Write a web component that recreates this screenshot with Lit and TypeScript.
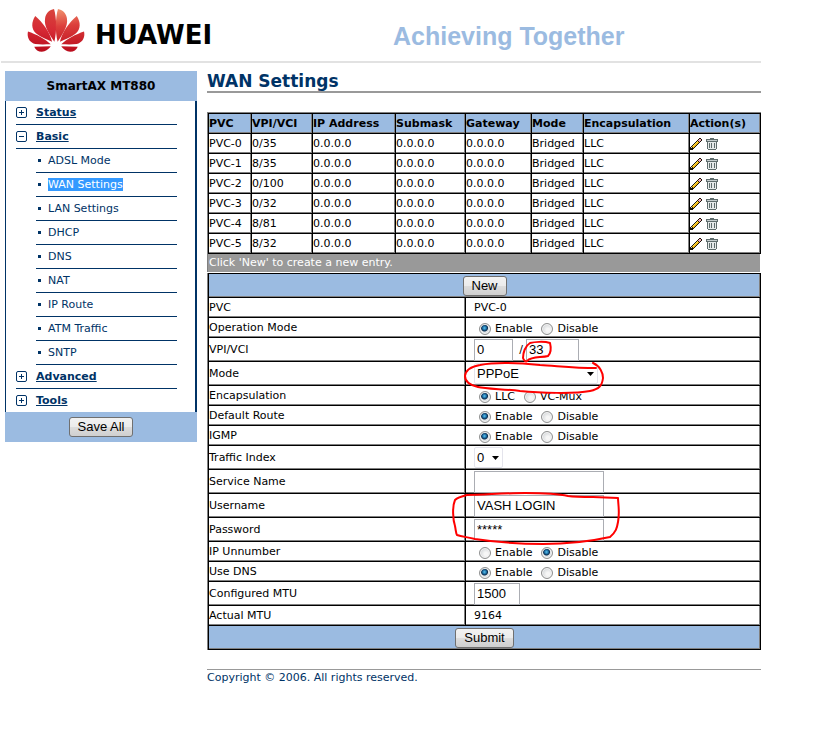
import { LitElement, html, css, svg, nothing, TemplateResult } from "lit";
import { customElement, state } from "lit/decorators.js";
import { classMap } from "lit/directives/class-map.js";

interface Pvc {
  name: string;
  circuit: string;
}

const PVCS: Pvc[] = [
  { name: "PVC-0", circuit: "0/35" },
  { name: "PVC-1", circuit: "8/35" },
  { name: "PVC-2", circuit: "0/100" },
  { name: "PVC-3", circuit: "0/32" },
  { name: "PVC-4", circuit: "8/81" },
  { name: "PVC-5", circuit: "8/32" },
];

const COLUMNS = ["PVC", "VPI/VCI", "IP Address", "Submask", "Gateway", "Mode", "Encapsulation", "Action(s)"];

const PAGES = ["ADSL Mode", "WAN Settings", "LAN Settings", "DHCP", "DNS", "NAT", "IP Route", "ATM Traffic", "SNTP"];

@customElement("brand-header")
class BrandHeader extends LitElement {
  static styles = css`
    :host {
      display: flex;
      align-items: center;
      height: 61px;
      border-bottom: 2px solid #e2e2e2;
      margin-left: 1px;
    }
    .logo {
      width: 58px;
      height: 45px;
      margin-left: 26px;
      flex: none;
    }
    .name {
      font: bold 26px/32px "DejaVu Sans", Verdana, sans-serif;
      color: #000;
      margin: 8px 0 0 10px;
      flex: none;
      width: 48%;
      max-width: 298px;
    }
    .slogan {
      font: bold 25px/28px "Liberation Sans", Arial, sans-serif;
      color: #9bbbe1;
      margin-top: 10px;
      white-space: nowrap;
    }
  `;

  render() {
    const half = svg`
      <path d="M164 122C150 100 131 76 136 50C139 34 150 26 163 23C171 50 172 92 164 122Z" />
      <path d="M157 122C152 96 128 62 106 44C94 62 93 84 110 98C124 109 142 116 157 122Z" />
      <path d="M153 130C138 114 108 99 84 91C80 108 88 125 106 129C120 131 138 130 153 130Z" />
      <path d="M153 136L103 137C107 149 121 155 134 151C143 148 149 142 153 136Z" />`;
    return html`
      <svg class="logo" viewBox="81 20 176 136" aria-hidden="true">
        <defs>
          <linearGradient id="left" gradientUnits="userSpaceOnUse" x1="150" y1="22" x2="135" y2="152">
            <stop offset="0" stop-color="#d8453c" />
            <stop offset="0.5" stop-color="#d62a35" />
            <stop offset="1" stop-color="#b80c1c" />
          </linearGradient>
          <linearGradient id="right" gradientUnits="userSpaceOnUse" x1="150" y1="22" x2="135" y2="152">
            <stop offset="0" stop-color="#f0926e" />
            <stop offset="0.4" stop-color="#dc3f3c" />
            <stop offset="1" stop-color="#bb0d1e" />
          </linearGradient>
        </defs>
        <g fill="url(#left)">${half}</g>
        <g fill="url(#right)" transform="translate(338 0) scale(-1 1)">${half}</g>
      </svg>
      <span class="name">HUAWEI</span>
      <span class="slogan">Achieving Together</span>
    `;
  }
}

@customElement("side-menu")
class SideMenu extends LitElement {
  @state() private current = "WAN Settings";

  static styles = css`
    :host {
      display: block;
      width: 192px;
      flex: none;
      font: 11px/14px "DejaVu Sans", Verdana, sans-serif;
    }
    .title {
      margin: 0;
      background: #9bbbe1;
      color: #000;
      font-size: 12px;
      line-height: 30px;
      text-align: center;
    }
    .body {
      border-left: 1px solid #003366;
      border-right: 2px solid #003366;
      padding: 0 18px 0 10px;
    }
    ul {
      list-style: none;
      margin: 0;
      padding: 0;
    }
    .row {
      display: flex;
      align-items: center;
      height: 23px;
      border-bottom: 1px solid #003366;
    }
    .last {
      border-bottom: 0;
    }
    .mark {
      width: 11px;
      height: 11px;
      margin-right: 9px;
    }
    .sub {
      margin-left: 20px;
    }
    .bullet {
      width: 3px;
      height: 3px;
      margin: 0 7px 0 2px;
      background: #003366;
    }
    a {
      color: #003366;
      text-decoration: none;
      line-height: 13px;
    }
    .group {
      font-weight: bold;
      text-decoration: underline;
    }
    .chosen {
      background: #3399ff;
      color: #fff;
    }
    .foot {
      display: flex;
      justify-content: center;
      align-items: center;
      height: 30px;
      background: #9bbbe1;
    }
    button {
      box-sizing: border-box;
      height: 20px;
      padding: 0 8px;
      border: 1px solid #707070;
      border-radius: 3px;
      background: linear-gradient(#f2f2f2, #ebebeb 50%, #dddddd 50%, #cfcfcf);
      color: #000;
      font: 13px/16px "Liberation Sans", Arial, sans-serif;
    }
  `;

  private group(name: string, open: boolean, last = false) {
    return html`<div class=${classMap({ row: true, last })}>
      <svg class="mark" viewBox="0 0 11 11" fill="none" stroke="#003366" aria-hidden="true">
        <rect x="0.5" y="0.5" width="10" height="10" rx="1.5" />
        <path d=${open ? "M3 5.5h5" : "M3 5.5h5M5.5 3v5"} />
      </svg>
      <a class="group" href="#${name}">${name}</a>
    </div>`;
  }

  render() {
    return html`
      <h2 class="title">SmartAX MT880</h2>
      <nav class="body">
        <ul>
          <li>${this.group("Status", false)}</li>
          <li>
            ${this.group("Basic", true)}
            <ul>
              ${PAGES.map(
                (p) => html`<li class="row sub">
                  <span class="bullet"></span>
                  <a
                    href="#"
                    class=${classMap({ chosen: p === this.current })}
                    @click=${(e: Event) => {
                      e.preventDefault();
                      this.current = p;
                    }}
                    >${p}</a
                  >
                </li>`
              )}
            </ul>
          </li>
          <li>${this.group("Advanced", false)}</li>
          <li>${this.group("Tools", false, true)}</li>
        </ul>
      </nav>
      <div class="foot"><button type="button">Save All</button></div>
    `;
  }
}

@customElement("wan-settings")
class WanSettings extends LitElement {
  static styles = css`
    :host {
      display: block;
      flex: 1;
      min-width: 0;
      color: #000;
      font: 11px/14px "DejaVu Sans", Verdana, sans-serif;
    }
    h1 {
      margin: 0 0 19px;
      padding-top: 1px;
      border-bottom: 2px solid #999;
      color: #003366;
      font-size: 17px;
      line-height: 19px;
    }
    table {
      width: 100%;
      table-layout: fixed;
      border-collapse: separate;
      border-spacing: 0;
      border-top: 1px solid #000;
      border-left: 1px solid #000;
    }
    .frame {
      border-left: 1px solid #808080;
    }
    .list {
      border-top: 1px solid #808080;
    }
    th,
    td {
      box-sizing: border-box;
      height: 20px;
      padding: 0;
      border-right: 1px solid #000;
      border-bottom: 1px solid #000;
      box-shadow: inset -1px -1px 0 #808080;
      text-align: left;
      font-weight: normal;
      white-space: nowrap;
    }
    thead th {
      background: #9bbbe1;
      font-weight: bold;
    }
    .c0 { width: 43px; }
    .c1 { width: 61px; }
    .c2 { width: 83px; }
    .c3 { width: 70px; }
    .c4 { width: 66px; }
    .c5 { width: 52px; }
    .c6 { width: 106px; }
    .c7 { width: 71px; }
    .label { width: 257px; }
    .value { width: 295px; }
    .icons {
      display: flex;
      gap: 4px;
    }
    .icon {
      display: block;
      width: 12px;
      height: 12px;
      padding: 0;
      border: 0;
      background: none;
    }
    .icon svg {
      display: block;
      width: 12px;
      height: 12px;
    }
    .hint {
      margin: 0 1px 1px 0;
      padding-left: 1px;
      background: #999;
      color: #fff;
      line-height: 18px;
    }
    .tall {
      height: 24px;
    }
    .bar {
      background: #9bbbe1;
      text-align: center;
    }
    .cell {
      position: relative;
      display: flex;
      align-items: center;
      padding-left: 8px;
    }
    .radios {
      gap: 9px;
      padding: 3px 0 0 13px;
      line-height: 12px;
    }
    .radios label {
      display: flex;
      align-items: center;
      gap: 4px;
    }
    input,
    select,
    button {
      box-sizing: border-box;
      margin: 0;
      color: #000;
      font: 13px/16px "Liberation Sans", Arial, sans-serif;
    }
    input[type="radio"] {
      appearance: none;
      width: 12px;
      height: 12px;
      border: 1px solid #8e8f8f;
      border-radius: 50%;
      background: radial-gradient(circle at 60% 60%, #f6f6f6 20%, #cfd2d5 80%);
      box-shadow: inset 0 0 0 1px #f4f4f4;
    }
    input[type="radio"]:checked {
      background: radial-gradient(circle at 45% 40%, #5cc4ee 0, #1a6aa0 2px, #0b2c4c 3px, #dfe3e6 4px);
    }
    input[type="text"] {
      height: 22px;
      padding: 0 2px;
      border: 1px solid #abadb3;
      background: #fff;
    }
    .w-vpi { width: 39px; }
    .w-vci { width: 53px; }
    .w-full { width: 130px; }
    .w-mtu { width: 46px; }
    .slash {
      width: 13px;
      padding-left: 3px;
      box-sizing: border-box;
      text-align: center;
    }
    select {
      appearance: none;
      height: 21px;
      padding: 0 2px;
      border: 1px solid #e4e4ec;
      border-radius: 2px;
      background: #fff
        url("data:image/svg+xml,%3Csvg xmlns='http://www.w3.org/2000/svg' width='7' height='4'%3E%3Cpath d='M0 0h7L3.5 4z'/%3E%3C/svg%3E")
        no-repeat right 3px center;
    }
    .w-mode { width: 124px; }
    .w-traffic { width: 29px; }
    button {
      height: 20px;
      padding: 0 8px;
      border: 1px solid #707070;
      border-radius: 3px;
      background: linear-gradient(#f2f2f2, #ebebeb 50%, #dddddd 50%, #cfcfcf);
    }
    .bar button {
      display: block;
      margin: 0 auto;
    }
    .pen {
      position: absolute;
      z-index: 1;
      left: 0;
      top: 0;
      overflow: visible;
      pointer-events: none;
      fill: none;
      stroke: #ff0000;
      stroke-width: 2;
      stroke-linecap: round;
      stroke-linejoin: round;
    }
    footer {
      margin-top: 19px;
      border-top: 1px solid #999;
      color: #003366;
      line-height: 16px;
    }
  `;

  private row(label: string, id: string | null, value: unknown, tall = false) {
    return html`<tr>
      <th scope="row" class=${classMap({ tall })}>${id ? html`<label for=${id}>${label}</label>` : label}</th>
      <td>${value}</td>
    </tr>`;
  }

  private radios(name: string, options: string[], chosen: number): TemplateResult {
    return html`<div class="cell radios" role="radiogroup" aria-label=${name}>
      ${options.map(
        (o, i) => html`<label><input type="radio" name=${name} ?checked=${i === chosen} />${o}</label>`
      )}
    </div>`;
  }

  private box(id: string, width: string, value: string, mark: unknown = nothing) {
    return html`<div class="cell"><input id=${id} class=${width} type="text" .value=${value} />${mark}</div>`;
  }

  private pencil = html`<svg viewBox="0 0 12 12" shape-rendering="crispEdges" aria-hidden="true">
    <path d="M9 0h2v1h1v2h-1v1h-1v1H9v1H8v1H7v1H6v1H5v1H4v1H3v1H0V9h1V8h1V7h1V6h1V5h1V4h1V3h1V2h1V1h1z" fill="#1a1408" />
    <path d="M7 3h1v1h1v1H8v1H7v1H6v1H5v1H4v1H3V9H2V8h1V7h1V6h1V5h1V4h1z" fill="#f2b81a" />
    <path d="M7 3h1v1H7v1H6v1H5v1H4v1H3V7h1V6h1V5h1V4h1z" fill="#ffe14a" />
    <path d="M9 1h2v2h-1v1H9V3H8V2h1z" fill="#f0a8b8" />
    <path d="M1 9h1v1H1z" fill="#f3dfb8" />
  </svg>`;

  private trash = html`<svg viewBox="0 0 12 12" shape-rendering="crispEdges" aria-hidden="true">
    <path d="M4 0h4v1h4v3H0V1h4z" fill="#5f6d6d" />
    <path d="M1 2h10v1H1z" fill="#c4cccc" />
    <path d="M1 4h10v7h-1v1H2v-1H1z" fill="#5f6d6d" />
    <path d="M2 4h8v7H2z" fill="#e6eaea" />
    <path d="M3 5h1v5H3zM5 5h1v5H5zM8 5h1v5H8z" fill="#5f6d6d" />
  </svg>`;

  render() {
    const onOff = ["Enable", "Disable"];
    return html`
      <h1>WAN Settings</h1>
      <div class="frame list">
        <table>
          <colgroup>
            ${COLUMNS.map((_, i) => html`<col class="c${i}" />`)}
          </colgroup>
          <thead>
            <tr>
              ${COLUMNS.map((c) => html`<th scope="col">${c}</th>`)}
            </tr>
          </thead>
          <tbody>
            ${PVCS.map(
              (p) => html`<tr>
                <td>${p.name}</td>
                <td>${p.circuit}</td>
                <td>0.0.0.0</td>
                <td>0.0.0.0</td>
                <td>0.0.0.0</td>
                <td>Bridged</td>
                <td>LLC</td>
                <td>
                  <div class="icons">
                    <button class="icon" type="button" aria-label="Edit ${p.name}">${this.pencil}</button>
                    <button class="icon" type="button" aria-label="Delete ${p.name}">${this.trash}</button>
                  </div>
                </td>
              </tr>`
            )}
          </tbody>
        </table>
        <p class="hint">Click 'New' to create a new entry.</p>
      </div>
      <form class="frame" @submit=${(e: Event) => e.preventDefault()}>
        <table>
          <colgroup>
            <col class="label" />
            <col class="value" />
          </colgroup>
          <tbody>
            <tr>
              <td class="bar tall" colspan="2"><button type="button">New</button></td>
            </tr>
            ${this.row("PVC", null, html`<div class="cell">PVC-0</div>`)}
            ${this.row("Operation Mode", null, this.radios("Operation Mode", onOff, 0))}
            ${this.row(
              "VPI/VCI",
              "vpi",
              html`<div class="cell">
                <input id="vpi" class="w-vpi" type="text" .value=${"0"} />
                <span class="slash">/</span>
                <input class="w-vci" type="text" aria-label="VCI" .value=${"33"} />
                <svg class="pen" width="100" height="22" viewBox="466 338 100 22" aria-hidden="true">
                  <path d="M550 342C544 340 534 341 530 342C525 345 523 352 523 357C524 360 526 361 527 360C532 355 541 357 548 355C551 352 551 346 550 342" />
                </svg>
              </div>`,
              true
            )}
            ${this.row(
              "Mode",
              "mode",
              html`<div class="cell">
                <select id="mode" class="w-mode"><option>PPPoE</option></select>
                <svg class="pen" width="140" height="21" viewBox="466 363 140 21" aria-hidden="true">
                  <path d="M593 363C600 366 603 373 603 378C602 386 599 389 590 391C575 394 540 393 520 391C505 389 486 389 478 387C469 385 465 382 465 376C466 368 474 366 480 365C495 362 520 363 540 365C558 366 575 368 596 368" />
                </svg>
              </div>`,
              true
            )}
            ${this.row("Encapsulation", null, this.radios("Encapsulation", ["LLC", "VC-Mux"], 0))}
            ${this.row("Default Route", null, this.radios("Default Route", onOff, 0))}
            ${this.row("IGMP", null, this.radios("IGMP", onOff, 0))}
            ${this.row(
              "Traffic Index",
              "traffic",
              html`<div class="cell"><select id="traffic" class="w-traffic"><option>0</option></select></div>`,
              true
            )}
            ${this.row("Service Name", "service", this.box("service", "w-full", ""), true)}
            ${this.row(
              "Username",
              "user",
              this.box(
                "user",
                "w-full",
                "VASH LOGIN",
                html`<svg class="pen" width="160" height="22" viewBox="466 494 160 22" aria-hidden="true">
                  <path d="M467 494C459 496 456 498 455 499C452 506 453 519 455 525C456 530 456 533 457 534C462 536 468 536 475 538C495 541 520 543 543 543C565 543 592 540 610 536C616 531 617 527 618 521C620 511 618 503 618 497L593 496C583 496 575 496 568 495C555 492 540 492 525 492C505 492 482 494 467 494" />
                </svg>`
              ),
              true
            )}
            ${this.row("Password", "pass", this.box("pass", "w-full", "*****"), true)}
            ${this.row("IP Unnumber", null, this.radios("IP Unnumber", onOff, 1))}
            ${this.row("Use DNS", null, this.radios("Use DNS", onOff, 0))}
            ${this.row("Configured MTU", "mtu", this.box("mtu", "w-mtu", "1500"), true)}
            ${this.row("Actual MTU", null, html`<div class="cell">9164</div>`)}
            <tr>
              <td class="bar tall" colspan="2"><button type="submit">Submit</button></td>
            </tr>
          </tbody>
        </table>
      </form>
      <footer>Copyright © 2006. All rights reserved.</footer>
    `;
  }
}

@customElement("app-root")
class AppRoot extends LitElement {
  static styles = css`
    :host {
      display: block;
      padding-right: 62px;
      background: #fff;
    }
    .page {
      display: flex;
      align-items: flex-start;
      gap: 10px;
      padding: 8px 0 0 5px;
    }
  `;

  render() {
    return html`
      <brand-header></brand-header>
      <div class="page">
        <side-menu></side-menu>
        <wan-settings></wan-settings>
      </div>
    `;
  }
}
